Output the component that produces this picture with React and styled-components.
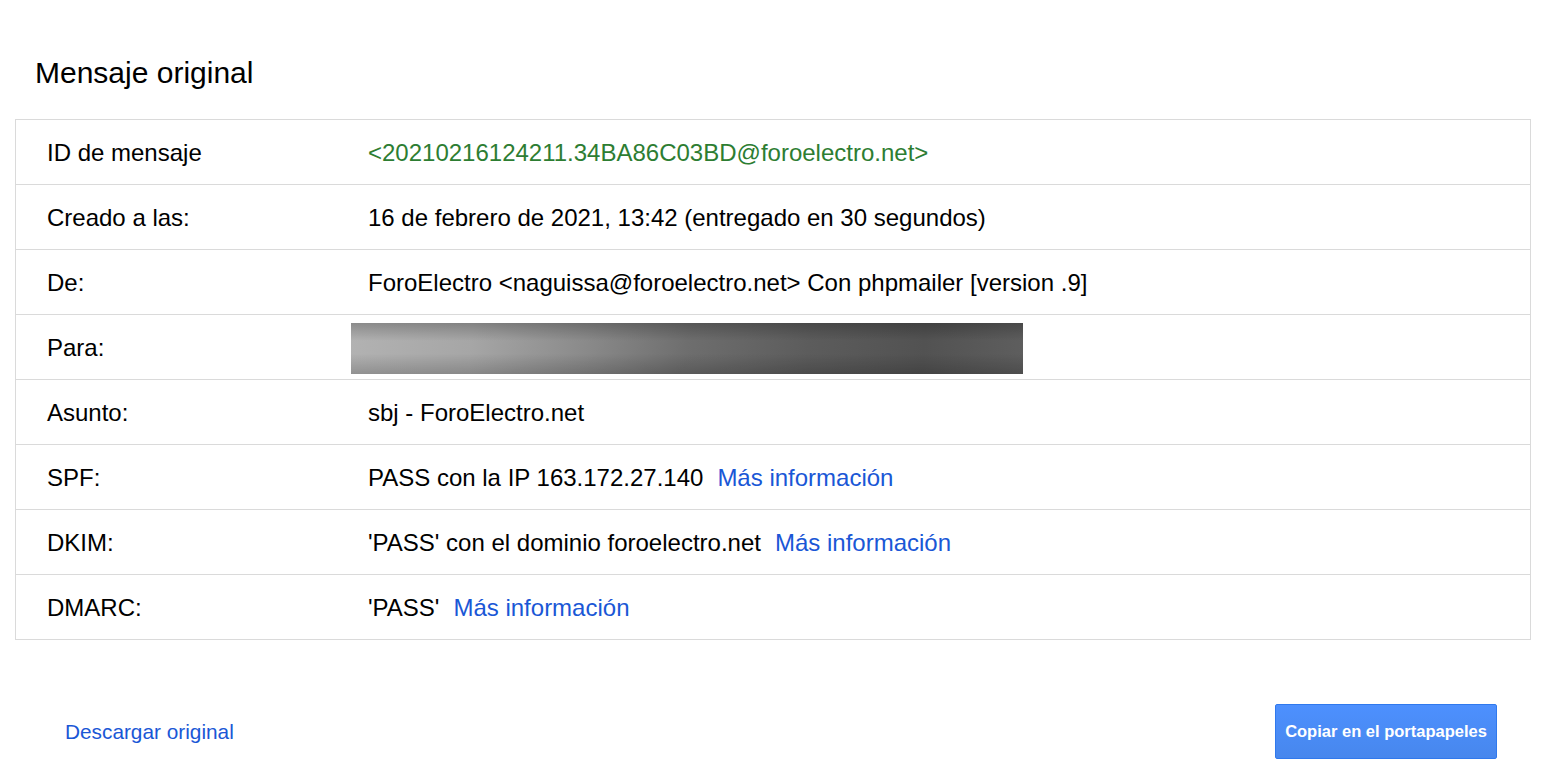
import React from 'react';
import styled, { createGlobalStyle } from 'styled-components';

const GlobalStyle = createGlobalStyle`
  body {
    margin: 0;
    background: #fff;
    font-family: Arial, "Liberation Sans", sans-serif;
    color: #000;
  }
`

const Page = styled.div`
  padding: 0 15px;
`

const Title = styled.h1`
  margin: 0;
  padding: 56px 0 0 20px;
  height: 63px;
  font-size: 30px;
  font-weight: 400;
  line-height: 34px;
`

const Table = styled.div`
  border: 1px solid #dadada;
`

const Row = styled.div`
  display: grid;
  grid-template-columns: 352px 1fr;
  align-items: center;
  height: 62px;
  padding-top: 2px;
  border-top: ${props => (props.first ? 'none' : '1px solid #dadada')};
  font-size: 24px;
`

const Label = styled.div`
  padding-left: 31px;
`

const Value = styled.div`
  color: ${props => (props.green ? '#2d7d32' : '#000')};
  display: flex;
  align-items: center;
`

const Link = styled.a`
  color: #1a57d6;
  text-decoration: none;
  margin-left: ${props => props.gap || '0'};
  cursor: pointer;
`

const Redacted = styled.div`
  margin-left: -17px;
  width: 672px;
  height: 51px;
  background:
    linear-gradient(180deg, rgba(0, 0, 0, 0.22) 0%, rgba(0, 0, 0, 0) 35%, rgba(0, 0, 0, 0) 60%, rgba(0, 0, 0, 0.18) 100%),
    linear-gradient(95deg, #b2b2b2 0%, #a6a6a6 18%, #8a8a8a 35%, #6e6e6e 50%, #5c5c5c 68%, #525252 85%, #5e5e5e 100%);
`

const Footer = styled.div`
  display: flex;
  justify-content: space-between;
  align-items: center;
  padding: 64px 34px 0 50px;
`

const FooterLink = styled.a`
  color: #1a57d6;
  font-size: 20.8px;
  text-decoration: none;
  cursor: pointer;
`

const CopyButton = styled.button`
  height: 55px;
  width: 222px;
  border: 1px solid #3079ed;
  border-radius: 2px;
  background: linear-gradient(180deg, #4d90fe, #4787ed);
  color: #fff;
  font-family: Arial, "Liberation Sans", sans-serif;
  font-size: 16.5px;
  font-weight: 700;
  cursor: pointer;
`

const rows = [
  { label: 'ID de mensaje', value: '<20210216124211.34BA86C03BD@foroelectro.net>', green: true },
  { label: 'Creado a las:', value: '16 de febrero de 2021, 13:42 (entregado en 30 segundos)' },
  { label: 'De:', value: 'ForoElectro <naguissa@foroelectro.net> Con phpmailer [version .9]' },
  { label: 'Para:', redacted: true },
  { label: 'Asunto:', value: 'sbj - ForoElectro.net' },
  { label: 'SPF:', value: 'PASS con la IP 163.172.27.140', link: true },
  { label: 'DKIM:', value: "'PASS' con el dominio foroelectro.net", link: true },
  { label: 'DMARC:', value: "'PASS'", link: true },
]

export default function App() {
  return (
    <Page>
      <GlobalStyle />
      <Title>Mensaje original</Title>
      <Table>
        {rows.map((r, i) => (
          <Row key={r.label} first={i === 0}>
            <Label>{r.label}</Label>
            <Value green={r.green}>
              {r.redacted ? <Redacted /> : r.value}
              {r.link && <Link gap="14px">Más información</Link>}
            </Value>
          </Row>
        ))}
      </Table>
      <Footer>
        <FooterLink>Descargar original</FooterLink>
        <CopyButton>Copiar en el portapapeles</CopyButton>
      </Footer>
    </Page>
  );
}
